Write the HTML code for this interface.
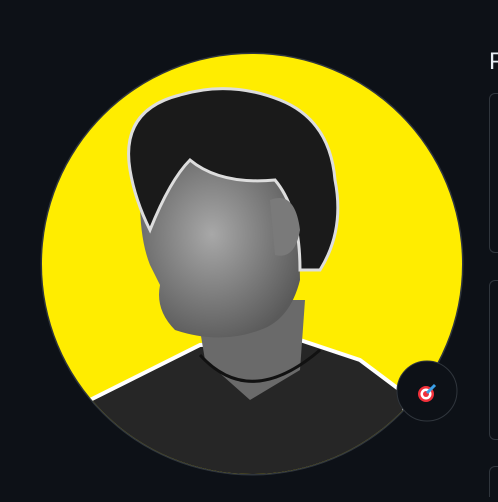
<!DOCTYPE html><html style="overflow:hidden;height:502px"><head><style>
body{margin:0;width:498px;height:502px;background:#0d1117;overflow:hidden;position:relative;font-family:"Liberation Sans",sans-serif}
.p{position:absolute;left:489px;top:48px;color:#e6edf3;font-size:24px}
.box{position:absolute;left:489px;width:40px;border:1px solid #30363d;border-radius:6px}
</style></head><body>
<svg width="498" height="502" style="position:absolute;left:0;top:0">
<defs><clipPath id="c"><circle cx="252" cy="264" r="210"/></clipPath>
<radialGradient id="f" cx="0.45" cy="0.45" r="0.6"><stop offset="0" stop-color="#a8a8a8"/><stop offset="1" stop-color="#5a5a5a"/></radialGradient></defs>
<circle cx="252" cy="264" r="211.5" fill="#30363d"/>
<circle cx="252" cy="264" r="210" fill="#ffed00"/>
<g clip-path="url(#c)">
<path d="M90 400 L150 370 L200 345 L300 340 L360 360 L400 390 L420 480 L80 480 Z" fill="#262626" stroke="#fff" stroke-width="4"/>
<path d="M195 300 L205 360 L250 400 L300 370 L305 300 Z" fill="#6a6a6a"/>
<path d="M140 200 Q140 160 180 150 L270 170 Q300 210 300 280 Q290 320 260 330 Q220 345 175 330 Q155 310 160 285 L150 265 Q140 240 140 200 Z" fill="url(#f)"/>
<path d="M130 170 Q120 110 180 95 Q230 80 280 100 Q330 120 335 180 Q345 230 320 270 L300 270 Q300 210 275 180 Q220 185 190 160 Q170 180 150 230 Q135 200 130 170 Z" fill="#1a1a1a" stroke="#ddd" stroke-width="3"/>
<path d="M270 200 Q295 190 300 230 Q295 260 275 255 Z" fill="#7a7a7a"/>
<path d="M200 355 Q250 410 320 350" fill="none" stroke="#111" stroke-width="3"/>
</g>
<circle cx="427" cy="391" r="30" fill="#0d1117" stroke="#30363d" stroke-width="1"/>
<circle cx="426" cy="394" r="8" fill="#f0303a"/><circle cx="426" cy="394" r="5.5" fill="#fff"/><circle cx="426" cy="394" r="3" fill="#f0303a"/>
<path d="M427 393 L435 385" stroke="#3aa0e8" stroke-width="3"/>
</svg>
<div class="p">P</div>
<div class="box" style="top:93px;height:158px"></div>
<div class="box" style="top:280px;height:158px"></div>
<div class="box" style="top:466px;height:30px;border-bottom:none;border-radius:6px 6px 0 0"></div>
</body></html>
